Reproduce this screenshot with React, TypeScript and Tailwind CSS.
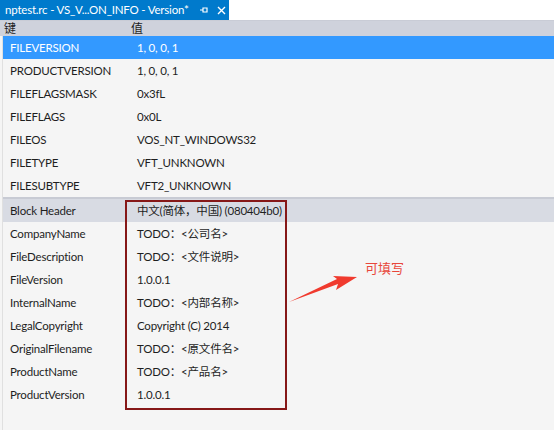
import React from 'react';

interface Row {
    key: string;
    value: string;
}

const topRows: Row[] = [
    { key: 'FILEVERSION', value: '1, 0, 0, 1' },
    { key: 'PRODUCTVERSION', value: '1, 0, 0, 1' },
    { key: 'FILEFLAGSMASK', value: '0x3fL' },
    { key: 'FILEFLAGS', value: '0x0L' },
    { key: 'FILEOS', value: 'VOS_NT_WINDOWS32' },
    { key: 'FILETYPE', value: 'VFT_UNKNOWN' },
    { key: 'FILESUBTYPE', value: 'VFT2_UNKNOWN' },
];

const blockRows: Row[] = [
    { key: 'CompanyName', value: 'TODO：<公司名>' },
    { key: 'FileDescription', value: 'TODO：<文件说明>' },
    { key: 'FileVersion', value: '1.0.0.1' },
    { key: 'InternalName', value: 'TODO：<内部名称>' },
    { key: 'LegalCopyright', value: 'Copyright (C) 2014' },
    { key: 'OriginalFilename', value: 'TODO：<原文件名>' },
    { key: 'ProductName', value: 'TODO：<产品名>' },
    { key: 'ProductVersion', value: '1.0.0.1' },
];

const font = { fontFamily: 'Lato, "Noto Sans CJK SC", sans-serif' };

const TableRow: React.FC<{ row: Row; className?: string }> = ({ row, className }) => (
    <div className={`flex items-center h-[23px] text-[11.5px] tracking-[-0.2px] ${className ?? 'text-[#1e1e1e]'}`}>
        <div className="w-[134px] pl-[7px] shrink-0">{row.key}</div>
        <div className="whitespace-nowrap">{row.value}</div>
    </div>
);

export default function App() {
    return (
        <div className="relative w-[554px] h-[430px] bg-[#f5f5f5] overflow-hidden" style={font}>
            {/* tab strip */}
            <div className="flex h-[21px] bg-white border-b border-[#c9ccd6]">
                <div className="flex items-center w-[229px] shrink-0 bg-[#007acc] text-white text-[11.5px] tracking-[-0.2px] pl-[5px]">
                    <span className="whitespace-nowrap">nptest.rc - VS_V...ON_INFO - Version*</span>
                    <svg width="10" height="10" viewBox="0 0 10 10" className="ml-[10px] shrink-0">
                        <path d="M1 5h3M4 2.5v5M4 3h4v4H4" stroke="white" strokeWidth="1.2" fill="none" />
                    </svg>
                    <svg width="9" height="9" viewBox="0 0 9 9" className="ml-[8px] shrink-0">
                        <path d="M1 1l7 7M8 1l-7 7" stroke="white" strokeWidth="1.4" />
                    </svg>
                </div>
            </div>

            {/* column headers */}
            <div className="flex items-center h-[15px] bg-[#cfd2dc] text-[12px] text-[#1e1e1e]">
                <div className="w-[131px] pl-[4px]">键</div>
                <div>值</div>
            </div>

            <div className="border-l border-[#e0e0e0] ml-[2px]">
                {topRows.map((r, i) => (
                    <TableRow
                        key={r.key}
                        row={r}
                        className={i === 0 ? 'bg-[#3399ff] text-white' : undefined}
                    />
                ))}
                <div className="h-[2px] bg-[#c8cbd4]" />
                <TableRow row={{ key: 'Block Header', value: '中文(简体，中国) (080404b0)' }} className="bg-[#d8dbe3] text-[#1e1e1e]" />
                {blockRows.map(r => (
                    <TableRow key={r.key} row={r} />
                ))}
                <div className="h-[30px]" />
            </div>

            {/* annotation box */}
            <div className="absolute left-[125px] top-[200px] w-[162px] h-[210px] border-2 border-[#861818]" />

            {/* arrow */}
            <svg className="absolute left-[286px] top-[270px]" width="76" height="36" viewBox="0 0 76 36">
                <path d="M3 32 L52 14 L50 20 L71 7 L47 6 L51 9 L3 32 Z" fill="#f03a2e" />
            </svg>
            <div className="absolute left-[365px] top-[259px] text-[13px] text-[#e8473b]">可填写</div>
        </div>
    );
}
